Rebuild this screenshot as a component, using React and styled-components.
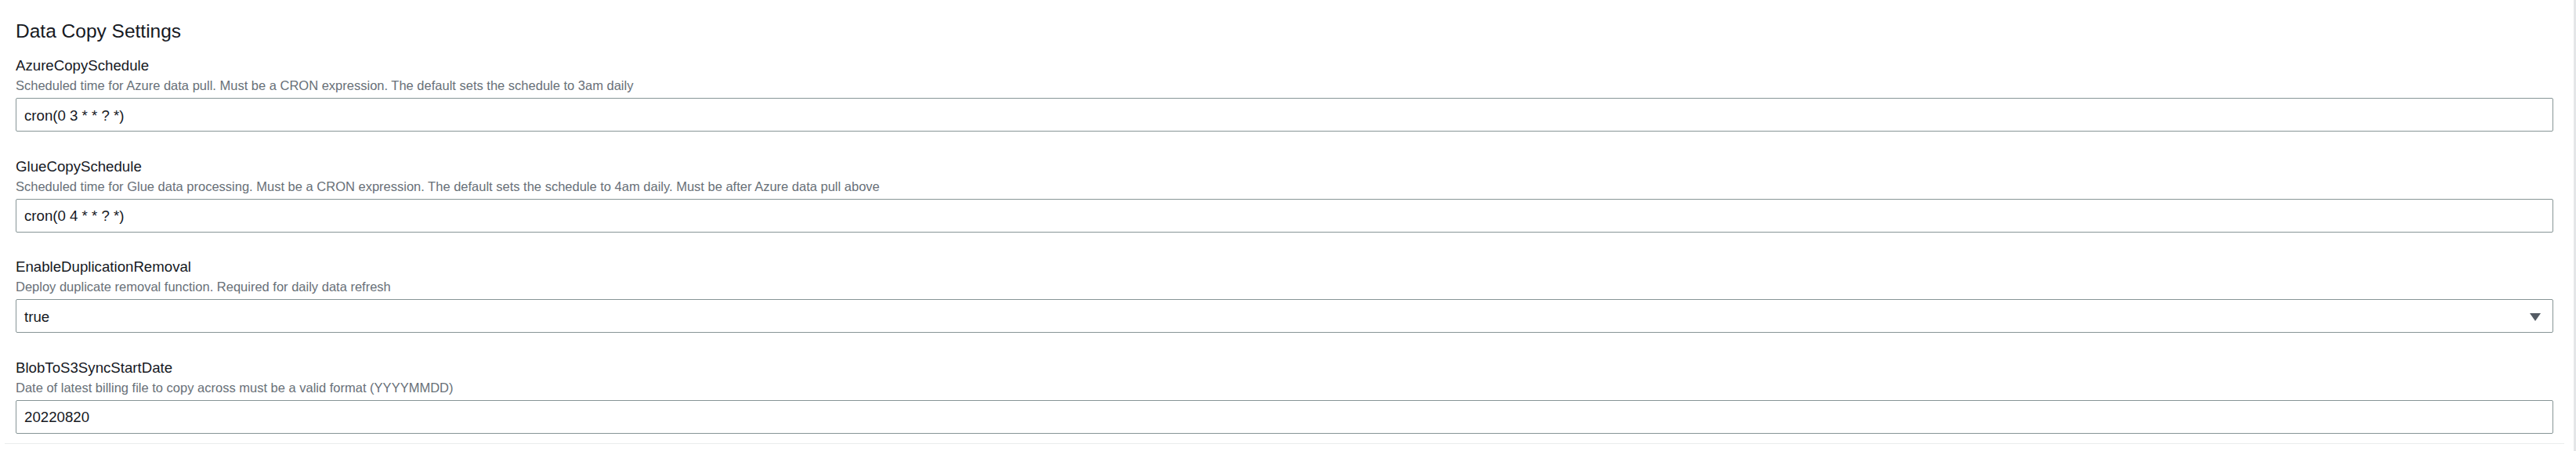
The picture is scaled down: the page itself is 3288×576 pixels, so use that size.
import styled, { createGlobalStyle } from 'styled-components';

const GlobalStyle = createGlobalStyle`
  html, body {
    margin: 0;
    padding: 0;
    background: #ffffff;
  }
  body {
    font-family: "Liberation Sans", Arial, sans-serif;
    color: #16191f;
  }
`;

// 설정 항목 목록
const fields = [
  {
    name: 'AzureCopySchedule',
    description:
      'Scheduled time for Azure data pull. Must be a CRON expression. The default sets the schedule to 3am daily',
    value: 'cron(0 3 * * ? *)',
  },
  {
    name: 'GlueCopySchedule',
    description:
      'Scheduled time for Glue data processing. Must be a CRON expression. The default sets the schedule to 4am daily. Must be after Azure data pull above',
    value: 'cron(0 4 * * ? *)',
  },
  {
    name: 'EnableDuplicationRemoval',
    description: 'Deploy duplicate removal function. Required for daily data refresh',
    value: 'true',
    select: true,
  },
  {
    name: 'BlobToS3SyncStartDate',
    description: 'Date of latest billing file to copy across must be a valid format (YYYYMMDD)',
    value: '20220820',
  },
];

function App() {
  return (
    <>
      <GlobalStyle />
      <Page>
        <Panel>
          <Content>
            <Title>Data Copy Settings</Title>
            <FieldList>
              {fields.map((field) => (
                <Field key={field.name}>
                  <Label>{field.name}</Label>
                  <Description>{field.description}</Description>
                  <InputBox>
                    <Value>{field.value}</Value>
                    {field.select && <Caret />}
                  </InputBox>
                </Field>
              ))}
            </FieldList>
          </Content>
          <Divider />
        </Panel>
        <EdgeLine />
      </Page>
    </>
  );
}

const Page = styled.div`
  display: flex;
  width: 3288px;
  height: 576px;
  overflow: hidden;
`;

const Panel = styled.div`
  flex: 1;
  display: flex;
  flex-direction: column;
`;

const EdgeLine = styled.div`
  width: 3px;
  background: #e4e6e8;
`;

const Content = styled.div`
  padding: 25px 26px 0 20px;
`;

const Title = styled.h2`
  margin: 0;
  font-size: 24.5px;
  line-height: 30px;
  font-weight: 400;
  color: #16191f;
`;

const FieldList = styled.div`
  display: flex;
  flex-direction: column;
  gap: 32.5px;
  margin-top: 17px;
`;

const Field = styled.div`
  display: flex;
  flex-direction: column;
`;

const Label = styled.div`
  font-size: 18.67px;
  line-height: 24px;
  color: #16191f;
`;

const Description = styled.div`
  margin-top: 3px;
  font-size: 16.5px;
  line-height: 20px;
  color: #687078;
`;

const InputBox = styled.div`
  margin-top: 6px;
  height: 43px;
  box-sizing: border-box;
  border: 1px solid #879596;
  border-radius: 2px;
  display: flex;
  align-items: center;
  justify-content: space-between;
  padding: 2px 15px 0 10px;
`;

const Value = styled.span`
  font-size: 18.67px;
  color: #16191f;
`;

const Caret = styled.span`
  width: 0;
  height: 0;
  border-left: 7px solid transparent;
  border-right: 7px solid transparent;
  border-top: 10px solid #545b64;
`;

const Divider = styled.div`
  margin: auto 12px 9px 6px;
  height: 1px;
  background: #eaeded;
`;

export default App;
